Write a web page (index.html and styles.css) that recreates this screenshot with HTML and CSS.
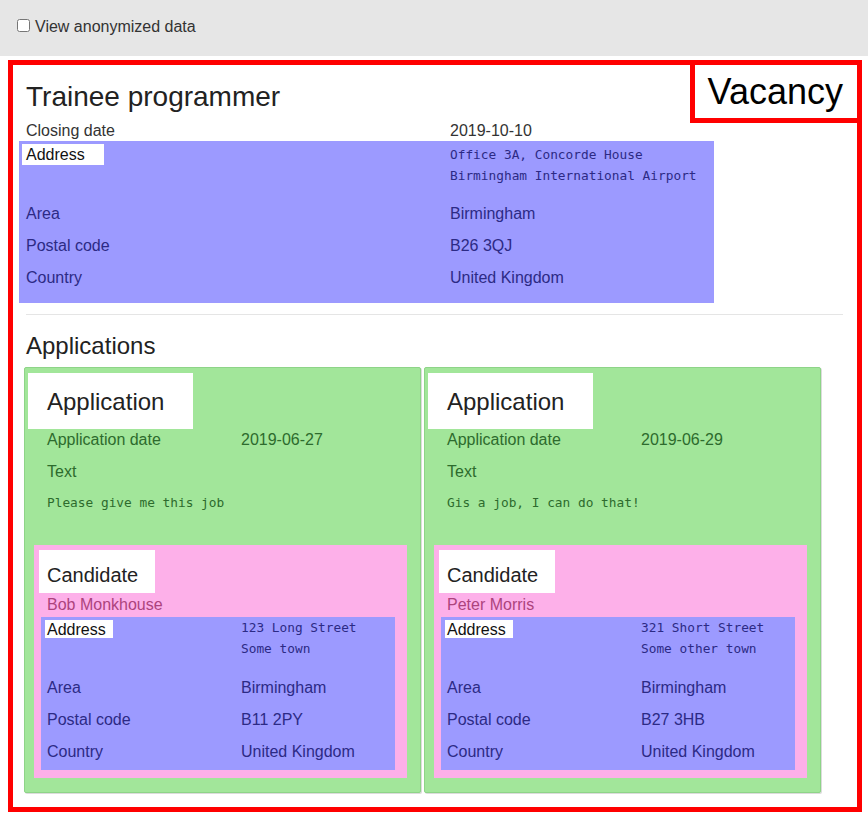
FILE: index.html
```html
<!DOCTYPE html>
<html lang="en">
<head>
<meta charset="utf-8">
<title>Vacancy</title>
<link rel="stylesheet" href="styles.css">
</head>
<body>
<div class="topbar">
  <label class="anon"><input type="checkbox" class="anon-check"><span class="anon-text">View anonymized data</span></label>
</div>
<section class="vacancy">
  <div class="tag-vacancy">Vacancy</div>
  <h1 class="title">Trainee programmer</h1>
  <div class="kv kv-top closing"><span class="k">Closing date</span><span class="v">2019-10-10</span></div>
  <div class="address address-top">
    <div class="kv kv-top addr-row"><span class="k"><span class="addr-tag addr-tag-top">Address</span></span><span class="v mono">Office 3A, Concorde House<br>Birmingham International Airport</span></div>
    <div class="kv kv-top row32"><span class="k">Area</span><span class="v">Birmingham</span></div>
    <div class="kv kv-top row32"><span class="k">Postal code</span><span class="v">B26 3QJ</span></div>
    <div class="kv kv-top row32"><span class="k">Country</span><span class="v">United Kingdom</span></div>
  </div>
  <hr class="sep">
  <h2 class="apps-title">Applications</h2>
  <div class="apps">
    <article class="app">
      <div class="tag-app">Application</div>
      <div class="kv kv-app app-date"><span class="k">Application date</span><span class="v">2019-06-27</span></div>
      <div class="app-text-label">Text</div>
      <div class="app-text mono">Please give me this job</div>
      <div class="candidate">
        <div class="tag-cand">Candidate</div>
        <div class="cand-name">Bob Monkhouse</div>
        <div class="address address-cand">
          <div class="kv kv-cand addr-row-cand"><span class="k"><span class="addr-tag addr-tag-cand">Address</span></span><span class="v mono">123 Long Street<br>Some town</span></div>
          <div class="kv kv-cand row32"><span class="k">Area</span><span class="v">Birmingham</span></div>
          <div class="kv kv-cand row32"><span class="k">Postal code</span><span class="v">B11 2PY</span></div>
          <div class="kv kv-cand row32"><span class="k">Country</span><span class="v">United Kingdom</span></div>
        </div>
      </div>
    </article>
    <article class="app">
      <div class="tag-app">Application</div>
      <div class="kv kv-app app-date"><span class="k">Application date</span><span class="v">2019-06-29</span></div>
      <div class="app-text-label">Text</div>
      <div class="app-text mono">Gis a job, I can do that!</div>
      <div class="candidate">
        <div class="tag-cand">Candidate</div>
        <div class="cand-name">Peter Morris</div>
        <div class="address address-cand">
          <div class="kv kv-cand addr-row-cand"><span class="k"><span class="addr-tag addr-tag-cand">Address</span></span><span class="v mono">321 Short Street<br>Some other town</span></div>
          <div class="kv kv-cand row32"><span class="k">Area</span><span class="v">Birmingham</span></div>
          <div class="kv kv-cand row32"><span class="k">Postal code</span><span class="v">B27 3HB</span></div>
          <div class="kv kv-cand row32"><span class="k">Country</span><span class="v">United Kingdom</span></div>
        </div>
      </div>
    </article>
  </div>
</section>
</body>
</html>
```
FILE: styles.css
```css
* { box-sizing: border-box; }

body {
  margin: 0;
  font-family: "Liberation Sans", Arial, Helvetica, sans-serif;
  font-size: 16px;
  color: #333;
  background: #fff;
}

.topbar {
  background: #e6e6e6;
  height: 56px;
  padding: 15px 17px 0 17px;
}

.anon {
  display: flex;
  align-items: flex-start;
  color: #333;
}

.anon-check {
  width: 13px;
  height: 13px;
  margin: 4px 5px 0 0;
}

.anon-text {
  line-height: 22px;
  padding-top: 1px;
}

.vacancy {
  position: relative;
  margin: 4px 6px 5px 8px;
  border: 5px solid #ff0000;
  padding: 17px 14px 14px 13px;
}

.tag-vacancy {
  position: absolute;
  top: 0;
  right: 0;
  background: #fff;
  border-left: 5px solid #ff0000;
  border-bottom: 5px solid #ff0000;
  padding: 7px 14px 6px 13px;
  font-size: 36px;
  line-height: 40px;
  color: #000;
}

.title {
  margin: 0 0 8px 0;
  font-size: 28px;
  line-height: 30px;
  font-weight: normal;
  color: #222;
}

.kv {
  display: grid;
  align-items: start;
}

.kv-top { grid-template-columns: 424px 1fr; }
.kv-app, .kv-cand { grid-template-columns: 194px 1fr; }

.closing {
  padding-top: 1px;
  line-height: 20px;
}

.mono {
  font-family: "DejaVu Sans Mono", "Liberation Mono", monospace;
  font-size: 12.8px;
  line-height: 21px;
}

.address {
  background: #9c9aff;
  color: #2c2a85;
}

.address-top {
  margin-left: -7px;
  width: 695px;
  padding: 3px 0 10px 7px;
}

.addr-row { margin-bottom: 11px; }

.addr-tag {
  display: inline-block;
  background: #fff;
  color: #111;
}

.addr-tag-top {
  margin-left: -4px;
  padding: 1px 19px 0 4px;
  line-height: 20px;
}

.row32 {
  padding-top: 2px;
  line-height: 30px;
}

.sep {
  margin: 11px 0 0 0;
  border: 0;
  border-top: 1px solid #e5e5e5;
  height: 0;
}

.apps-title {
  margin: 18px 0 8px 0;
  font-size: 24px;
  line-height: 26px;
  font-weight: normal;
  color: #222;
}

.apps {
  display: flex;
  gap: 3px;
  margin-left: -2px;
}

.app {
  width: 397px;
  background: #a2e69a;
  border: 1px solid #8ed488;
  border-radius: 2px;
  box-shadow: 1px 1px 0 #dcdcdc;
  padding: 5px 13px 14px 3px;
  color: #2d6b2d;
}

.tag-app {
  width: 165px;
  background: #fff;
  color: #222;
  font-size: 24px;
  line-height: 26px;
  padding: 16px 0 14px 19px;
}

.app-date {
  margin-top: 1px;
  padding-left: 19px;
  line-height: 20px;
  margin-bottom: 12px;
}

.app-text-label {
  padding-left: 19px;
  line-height: 20px;
  margin-bottom: 10px;
}

.app-text {
  padding-left: 19px;
  margin-bottom: 32px;
}

.candidate {
  margin-left: 6px;
  background: #fdb0e9;
  padding: 5px 12px 8px 5px;
}

.tag-cand {
  width: 116px;
  background: #fff;
  color: #222;
  font-size: 20px;
  line-height: 22px;
  padding: 14px 0 7px 8px;
}

.cand-name {
  padding: 2px 0 0 8px;
  line-height: 20px;
  margin-bottom: 2px;
  color: #ad437d;
}

.address-cand {
  margin-left: 2px;
  padding: 0 0 3px 6px;
}

.addr-row-cand { margin-bottom: 12px; }

.addr-tag-cand {
  margin: 3px 0 0 -2px;
  padding: 1px 7px 0 2px;
  line-height: 17px;
}
```
